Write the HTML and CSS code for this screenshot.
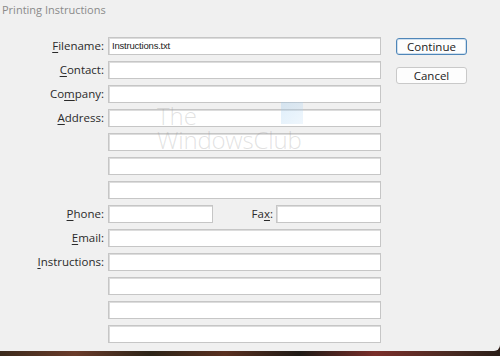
FILE: index.html
```html
<!DOCTYPE html>
<html>
<head>
<meta charset="utf-8">
<link rel="stylesheet" href="styles.css">
</head>
<body>
<div class="dialog">
  <div class="titlebar">Printing Instructions</div>
  <div class="content">
    <div class="form">
      <label class="lbl"><u>F</u>ilename:</label>
      <div class="field filled">Instructions.txt</div>
      <label class="lbl"><u>C</u>ontact:</label>
      <div class="field"></div>
      <label class="lbl">Co<u>m</u>pany:</label>
      <div class="field"></div>
      <label class="lbl"><u>A</u>ddress:</label>
      <div class="field"></div>
      <span></span>
      <div class="field"></div>
      <span></span>
      <div class="field"></div>
      <span></span>
      <div class="field"></div>
      <label class="lbl"><u>P</u>hone:</label>
      <div class="split">
        <div class="field half"></div>
        <label class="lbl fax">Fa<u>x</u>:</label>
        <div class="field half"></div>
      </div>
      <label class="lbl"><u>E</u>mail:</label>
      <div class="field"></div>
      <label class="lbl"><u>I</u>nstructions:</label>
      <div class="field"></div>
      <span></span>
      <div class="field"></div>
      <span></span>
      <div class="field"></div>
      <span></span>
      <div class="field"></div>
    </div>
    <div class="buttons">
      <button class="btn default">Continue</button>
      <button class="btn">Cancel</button>
    </div>
    <div class="watermark">
      <div class="wm-the">The</div>
      <div class="wm-club">WindowsClub</div>
      <div class="wm-logo"></div>
    </div>
  </div>
</div>
<div class="wallpaper"></div>
</body>
</html>
```

FILE: styles.css
```css
html, body {
  margin: 0;
  padding: 0;
}
body {
  width: 500px;
  height: 356px;
  overflow: hidden;
  background: #2a1a14;
  font-family: "Open Sans", "Noto Sans", "DejaVu Sans", sans-serif;
}
.dialog {
  height: 351px;
  background: #f0f0f0;
  border-bottom-right-radius: 6px;
  position: relative;
}
.titlebar {
  height: 22px;
  padding-left: 2px;
  font-size: 11px;
  line-height: 20px;
  color: #8a8a8a;
}
.content {
  display: flex;
  padding-top: 15px;
  position: relative;
}
.form {
  display: grid;
  grid-template-columns: 104px 273px;
  grid-auto-rows: 18px;
  column-gap: 4px;
  row-gap: 6px;
}
.lbl {
  font-size: 11.5px;
  color: #2a2a2a;
  text-align: right;
  line-height: 18px;
  white-space: nowrap;
}
.lbl u {
  text-decoration-thickness: 1px;
  text-underline-offset: 2px;
}
.field {
  box-sizing: border-box;
  height: 18px;
  background: #fff;
  border: 1px solid #c6c6c6;
  box-shadow: inset 1px 1px 0 #dcdcdc;
}
.filled {
  font-family: "Liberation Sans Narrow", "Liberation Sans", sans-serif;
  font-size: 9.5px;
  line-height: 16px;
  padding-left: 3px;
  color: #222;
  letter-spacing: -0.2px;
}
.split {
  display: flex;
  align-items: center;
}
.half {
  width: 105px;
}
.fax {
  width: 60px;
  margin-right: 3px;
}
.buttons {
  display: flex;
  flex-direction: column;
  gap: 12px;
  margin-left: 15px;
  padding-top: 1px;
}
.btn {
  box-sizing: border-box;
  width: 71px;
  height: 17px;
  padding: 0;
  font-family: "Open Sans", "Noto Sans", sans-serif;
  font-size: 11.5px;
  line-height: 15px;
  color: #222;
  background: #fdfdfd;
  border: 1px solid #c9c9c9;
  border-radius: 3px;
}
.btn.default {
  border-color: #4f86b8;
  box-shadow: inset 0 0 0 1px #cfe0ef;
}
.watermark {
  position: absolute;
  left: 157px;
  top: 82px;
  width: 160px;
  height: 60px;
  pointer-events: none;
  font-family: "Open Sans", sans-serif;
  color: rgba(150, 150, 150, 0.28);
  font-size: 24px;
  line-height: 24px;
}
.wm-the {
  font-weight: 300;
}
.wm-club {
  font-weight: 300;
  letter-spacing: -0.2px;
}
.wm-logo {
  position: absolute;
  left: 124px;
  top: -2px;
  width: 22px;
  height: 22px;
  background: linear-gradient(135deg, rgba(150, 200, 240, 0.3), rgba(190, 220, 245, 0.25));
}
.wallpaper {
  height: 5px;
  background: linear-gradient(90deg, #3b2a1c 0%, #6a3b2a 15%, #2d2418 30%, #5a3020 45%, #1f1a16 60%, #7a2e2a 75%, #4a2a22 90%, #2a1e18 100%);
}
```
